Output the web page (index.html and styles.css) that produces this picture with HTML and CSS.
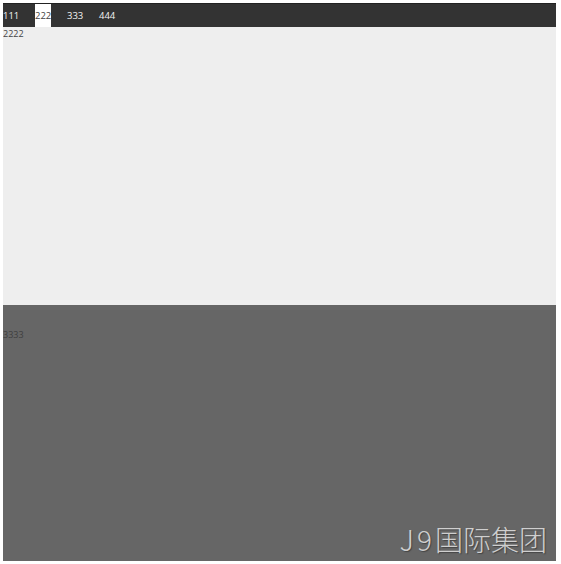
FILE: index.html
```html
<!DOCTYPE html>
<html lang="en">
<head>
    <meta charset="UTF-8">
    <meta name="viewport" content="width=device-width, initial-scale=1.0">
    <title>Tabs</title>
    <link rel="stylesheet" href="styles.css">
</head>
<body>

    <div class="container">
        <!-- Tab bar -->
        <ul class="tabs">
            <li class="tab">111</li>
            <li class="tab active">222</li>
            <li class="tab">333</li>
            <li class="tab">444</li>
        </ul>

        <!-- Panels -->
        <div class="panel panel-light">2222</div>
        <div class="panel panel-dark">
            <p class="panel-text">3333</p>
            <div class="watermark"><span class="watermark-latin">J9</span>国际集团</div>
        </div>
    </div>

</body>
</html>
```

FILE: styles.css
```css
body {
    font-family: "Open Sans", "Noto Sans CJK SC", sans-serif;
    font-size: 9px;
    background-color: white;
    margin: 3px 5px 3px 3px;
}

.container {
    display: flex;
    flex-direction: column;
    height: 558px;
}

.tabs {
    display: flex;
    gap: 16px;
    height: 24px;
    margin: 0;
    padding: 0;
    list-style: none;
    font-size: 9.5px;
    background-color: #333;
    border-top: 1px solid #222;
    box-sizing: border-box;
}

.tab {
    width: 16px;
    color: #f4f4f4;
    line-height: 23px;
}

.tab.active {
    background-color: white;
    color: #444;
}

.panel {
    color: #444;
}

.panel-light {
    height: 278px;
    padding-top: 1px;
    box-sizing: border-box;
    line-height: 11px;
    background-color: #eee;
}

.panel-dark {
    position: relative;
    flex: 1;
    background-color: #666;
}

.panel-text {
    margin: 0;
    padding-top: 24px;
    line-height: 11px;
    color: #3f3f3f;
}

/* Stamp in the corner, over the panel */
.watermark {
    position: absolute;
    right: 9px;
    bottom: 5px;
    font-family: "Noto Sans CJK SC", sans-serif;
    font-size: 28px;
    font-weight: 300;
    line-height: 34px;
    color: #cfcfcf;
    text-shadow: 1px 1px 1px #444;
}

.watermark-latin {
    letter-spacing: 3px;
}
```
